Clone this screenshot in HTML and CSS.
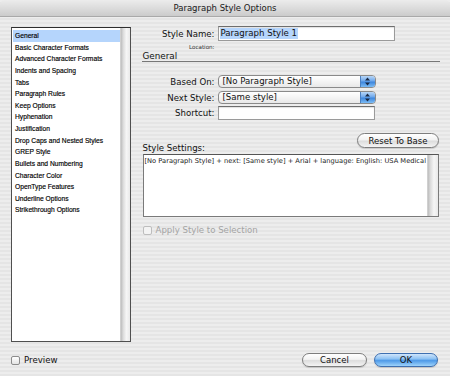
FILE: index.html
```html
<!DOCTYPE html>
<html lang="en">
<head>
  <meta charset="UTF-8">
  <title>Paragraph Style Options</title>
  <link rel="stylesheet" href="styles.css">
</head>
<body>
  <div class="window">
    <div class="titlebar">Paragraph Style Options</div>

    <div class="dialog-body">
      <div class="category-box">
        <ul class="category-list">
          <li class="selected">General</li>
          <li>Basic Character Formats</li>
          <li>Advanced Character Formats</li>
          <li>Indents and Spacing</li>
          <li>Tabs</li>
          <li>Paragraph Rules</li>
          <li>Keep Options</li>
          <li>Hyphenation</li>
          <li>Justification</li>
          <li>Drop Caps and Nested Styles</li>
          <li>GREP Style</li>
          <li>Bullets and Numbering</li>
          <li>Character Color</li>
          <li>OpenType Features</li>
          <li>Underline Options</li>
          <li>Strikethrough Options</li>
        </ul>
        <div class="scroll-track"></div>
      </div>

      <div class="panel">
        <div class="form-row">
          <label class="field-label">Style Name:</label>
          <div class="text-field name-field"><span class="text-selected">Paragraph Style 1</span></div>
        </div>
        <div class="form-row location-row">
          <span class="field-label small-label">Location:</span>
        </div>

        <h2 class="section-title">General</h2>

        <div class="form-row based-row">
          <label class="field-label">Based On:</label>
          <div class="popup">
            <span class="popup-value">[No Paragraph Style]</span>
            <span class="popup-arrows">
              <svg width="7" height="9" viewBox="0 0 7 9"><path d="M3.5 0.5 L6 3.5 H1 Z M3.5 8.5 L6 5.5 H1 Z" fill="#1b2a44"/></svg>
            </span>
          </div>
        </div>
        <div class="form-row next-row">
          <label class="field-label">Next Style:</label>
          <div class="popup">
            <span class="popup-value">[Same style]</span>
            <span class="popup-arrows">
              <svg width="7" height="9" viewBox="0 0 7 9"><path d="M3.5 0.5 L6 3.5 H1 Z M3.5 8.5 L6 5.5 H1 Z" fill="#1b2a44"/></svg>
            </span>
          </div>
        </div>
        <div class="form-row shortcut-row">
          <label class="field-label">Shortcut:</label>
          <div class="text-field shortcut-field"></div>
        </div>

        <div class="settings-header">
          <span class="settings-label">Style Settings:</span>
          <button class="btn btn-reset">Reset To Base</button>
        </div>
        <div class="settings-box">
          <p class="settings-text">[No Paragraph Style] + next: [Same style] + Arial + language: English: USA Medical</p>
          <div class="scroll-track"></div>
        </div>

        <div class="check-row disabled">
          <span class="checkbox"></span>
          <span>Apply Style to Selection</span>
        </div>
      </div>
    </div>

    <div class="footer">
      <div class="check-row">
        <span class="checkbox"></span>
        <span>Preview</span>
      </div>
      <div class="footer-buttons">
        <button class="btn btn-cancel">Cancel</button>
        <button class="btn btn-ok">OK</button>
      </div>
    </div>
  </div>
</body>
</html>
```

FILE: styles.css
```css
* {
  margin: 0;
  padding: 0;
  box-sizing: border-box;
}

body {
  width: 450px;
  height: 376px;
  overflow: hidden;
  font-family: "DejaVu Sans", "Liberation Sans", sans-serif;
  color: #111;
  background: repeating-linear-gradient(to bottom, #ededed 0, #ededed 2px, #e5e5e5 2px, #e5e5e5 4px);
}

.window {
  height: 376px;
  display: flex;
  flex-direction: column;
}

.titlebar {
  height: 17px;
  line-height: 16px;
  font-size: 8.5px;
  text-align: center;
  color: #1a1a1a;
  background: linear-gradient(to bottom, #ececec 0%, #d9d9d9 60%, #cbcbcb 100%);
  border-bottom: 1px solid #a9a9a9;
  border-radius: 5px 5px 0 0;
}

.dialog-body {
  display: flex;
  gap: 11px;
  padding: 9px 10px 0 11px;
}

/* category list */

.category-box {
  width: 122px;
  height: 315px;
  margin-top: 1px;
  display: flex;
  background: #fff;
  border: 1px solid #4f4f4f;
  border-top-color: #2e2e2e;
}

.category-list {
  flex: 1;
  list-style: none;
  padding-top: 2px;
}

.category-list li {
  height: 11.63px;
  line-height: 11.63px;
  padding-left: 2px;
  margin-left: 1px;
  font-family: "Liberation Sans", sans-serif;
  font-size: 6.7px;
  white-space: nowrap;
  color: #000;
  -webkit-text-stroke: 0.15px #000;
}

.category-list li.selected {
  background: #b5d5fc;
}

.scroll-track {
  width: 10px;
  background: linear-gradient(to right, #bdbdbd 0%, #dcdcdc 25%, #f6f6f6 60%, #e9e9e9 100%);
  border-left: 1px solid #d0d0d0;
}

/* right panel */

.panel {
  flex: 1;
  display: flex;
  flex-direction: column;
}

.form-row {
  display: flex;
  align-items: center;
  gap: 3px;
}

.field-label {
  width: 73px;
  text-align: right;
  font-size: 8.6px;
  white-space: nowrap;
}

.small-label {
  font-size: 5.6px;
  color: #333;
}

.text-field {
  height: 15px;
  background: #fff;
  border: 1px solid #9a9a9a;
  border-top-color: #6e6e6e;
  box-shadow: inset 0 1px 1px rgba(0, 0, 0, 0.12);
  font-size: 8.6px;
  padding: 1px 1px 0;
}

.name-field {
  width: 177px;
}

.text-selected {
  display: inline-block;
  height: 11px;
  line-height: 11px;
  background: #b5d5fc;
  padding: 0 1px;
}

.location-row {
  height: 8px;
  margin-top: 2px;
}

.section-title {
  height: 11px;
  line-height: 10px;
  font-size: 8.8px;
  font-weight: normal;
  border-bottom: 1px solid #777;
  padding-left: 1px;
}

.based-row {
  margin-top: 13px;
}

.next-row {
  margin-top: 3px;
}

.shortcut-row {
  margin-top: 2px;
}

.popup {
  width: 158px;
  height: 13px;
  display: flex;
  border: 1px solid #8a8a8a;
  border-radius: 4px;
  background: linear-gradient(to bottom, #ffffff 0%, #f3f3f3 55%, #e8e8e8 100%);
  overflow: hidden;
}

.popup-value {
  flex: 1;
  font-size: 8.6px;
  line-height: 11px;
  padding-left: 4px;
  white-space: nowrap;
}

.popup-arrows {
  width: 15px;
  display: flex;
  align-items: center;
  justify-content: center;
  background: linear-gradient(to bottom, #b8d6f6 0%, #6ea8ec 45%, #3e86dc 55%, #7cbcf5 100%);
  border-left: 1px solid #4b7fc0;
}

.shortcut-field {
  width: 157px;
  height: 14px;
}

/* style settings */

.settings-header {
  display: flex;
  justify-content: space-between;
  height: 20px;
  margin-top: 13px;
  padding-right: 1px;
}

.settings-label {
  align-self: flex-end;
  font-size: 8.6px;
  line-height: 10px;
  padding-left: 1px;
}

.btn {
  font-family: inherit;
  font-size: 8.5px;
  height: 15px;
  border-radius: 8px;
  border: 1px solid #7d7d7d;
  color: #111;
  background: linear-gradient(to bottom, #ffffff 0%, #f2f2f2 45%, #dddddd 55%, #f4f4f4 100%);
  box-shadow: 0 1px 1px rgba(0, 0, 0, 0.15);
}

.btn-reset {
  width: 82px;
}

.settings-box {
  height: 63px;
  margin: 1px 1px 0 1px;
  display: flex;
  background: #fff;
  border: 1px solid #7a7a7a;
  border-top-color: #555;
}

.settings-text {
  flex: 1;
  font-size: 6.7px;
  padding: 2px 1px 0;
  white-space: nowrap;
  color: #222;
}

.settings-box .scroll-track {
  width: 11px;
}

.check-row {
  display: flex;
  align-items: center;
  gap: 4px;
  font-size: 8.6px;
}

.panel .check-row {
  margin-top: 8px;
  padding-left: 1px;
}

.checkbox {
  width: 9px;
  height: 9px;
  border: 1px solid #8c8c8c;
  border-radius: 2px;
  background: linear-gradient(to bottom, #ffffff, #e4e4e4);
}

.check-row.disabled {
  color: #a4a4a4;
}

.check-row.disabled .checkbox {
  border-color: #bdbdbd;
  background: #f3f3f3;
}

/* footer */

.footer {
  margin-top: auto;
  display: flex;
  justify-content: space-between;
  align-items: center;
  padding: 0 12px 9px 11px;
}

.footer-buttons {
  display: flex;
  gap: 7px;
}

.btn-cancel {
  width: 65px;
  height: 14px;
}

.btn-ok {
  width: 64px;
  height: 14px;
  border-color: #3e6fb0;
  background: linear-gradient(to bottom, #cfe5fb 0%, #8ec2f3 40%, #4f9ae8 55%, #9ed3fb 100%);
}
```
